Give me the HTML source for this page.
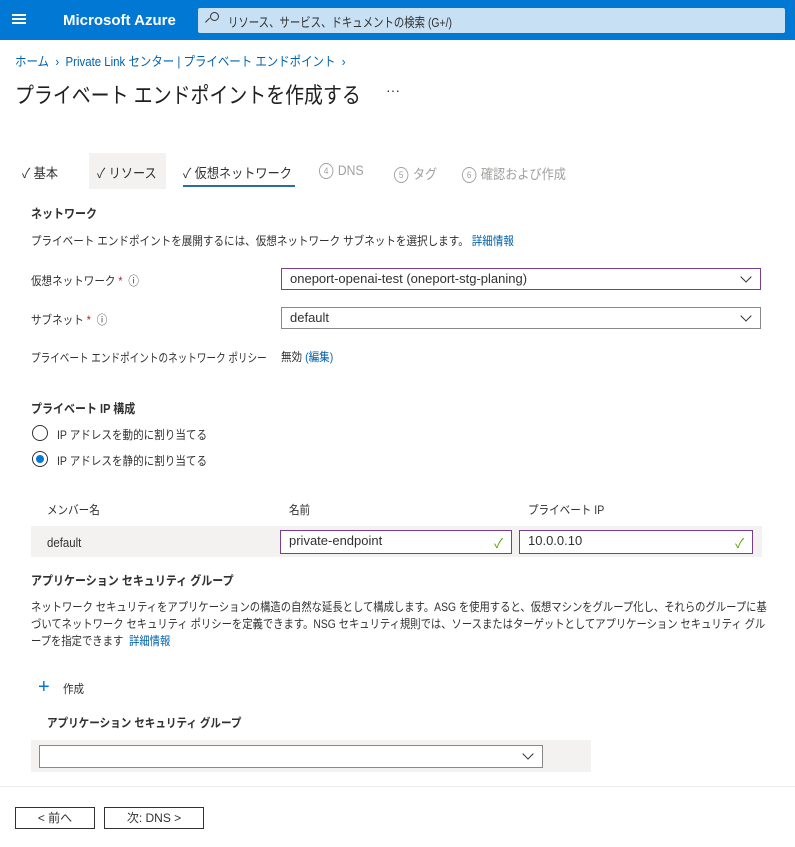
<!DOCTYPE html>
<html><head><meta charset="utf-8"><style>
body{margin:0;width:795px;height:847px;position:relative;background:#fff;font-family:"Liberation Sans","Noto Sans CJK JP",sans-serif;color:#323130;font-size:12px;overflow:hidden}
.a{position:absolute;white-space:nowrap;transform-origin:0 0}
.c{transform:scaleX(.88)}
.blue{color:#0062ad}
.inp{position:absolute;border:1px solid #8a8886;background:#fff;height:22px;box-sizing:border-box;font-size:13px;line-height:20px;padding-left:8px}
.pur{border-color:#7a3e8f}
.chev{position:absolute;right:10px;top:4px;width:7px;height:7px;border-right:1.3px solid #323130;border-bottom:1.3px solid #323130;transform:rotate(45deg)}
.ok{position:absolute;right:8px;top:3px;color:#57a300;font-size:13px}
.radio{position:absolute;width:14px;height:14px;border:1px solid #323130;border-radius:50%}
.btn{position:absolute;border:1px solid #323130;height:22px;box-sizing:border-box;font-size:12px;line-height:20px;text-align:center}
.num{display:inline-block;width:14px;height:14px;border:1px solid #a19f9d;border-radius:50%;font-size:9px;line-height:14px;text-align:center;margin-right:5px;vertical-align:1px}
.tab{font-size:13.5px;transform:scaleX(.9)}
</style></head><body>
<div class="a" style="left:0;top:0;width:795px;height:40px;background:#0078d4"></div>
<div class="a" style="left:12px;top:14px;width:14px;height:2px;background:#fff;box-shadow:0 4px 0 #fff,0 8px 0 #fff"></div>
<div class="a" style="left:63px;top:12px;color:#fff;font-size:15px;font-weight:bold">Microsoft Azure</div>
<div class="a" style="left:198px;top:8px;width:587px;height:25px;background:#c7e0f4;border-radius:2px"></div>
<div class="a" style="left:210px;top:12px;width:7px;height:7px;border:1.3px solid #323130;border-radius:50%"></div>
<div class="a" style="left:205px;top:22px;width:6px;height:1.3px;background:#323130;transform:rotate(-45deg)"></div>
<div class="a" style="left:228px;top:12px;font-size:13px;color:#323130;transform:scaleX(.8)">リソース、サービス、ドキュメントの検索 (G+/)</div>
<div class="a blue c" style="left:15px;top:51px;font-size:13px">ホーム &nbsp;›&nbsp; Private Link センター | プライベート エンドポイント &nbsp;›</div>
<div class="a" style="left:15px;top:78px;font-size:22px;color:#201f1e;transform:scaleX(.86)">プライベート エンドポイントを作成する</div>
<div class="a" style="left:386px;top:82px;font-size:14px">···</div>
<div class="a" style="left:89px;top:153px;width:77px;height:36px;background:#f3f2f1"></div>
<div class="a tab" style="left:22px;top:162px">✓ 基本</div>
<div class="a tab" style="left:97px;top:162px">✓ リソース</div>
<div class="a tab" style="left:183px;top:162px">✓ 仮想ネットワーク</div>
<div class="a" style="left:183px;top:185px;width:112px;height:2px;background:#2b6e9d"></div>
<div class="a tab" style="left:319px;top:163px;color:#a19f9d"><span class="num">4</span>DNS</div>
<div class="a tab" style="left:394px;top:163px;color:#a19f9d"><span class="num">5</span>タグ</div>
<div class="a tab" style="left:462px;top:163px;color:#a19f9d"><span class="num">6</span>確認および作成</div>
<div class="a c" style="left:31px;top:203px;font-size:12.5px;font-weight:bold">ネットワーク</div>
<div class="a c" style="left:31px;top:232px">プライベート エンドポイントを展開するには、仮想ネットワーク サブネットを選択します。 <span class="blue">詳細情報</span></div>
<div class="a c" style="left:31px;top:272px">仮想ネットワーク <span style="color:#a4262c">*</span> &nbsp;ⓘ</div>
<div class="inp pur" style="left:281px;top:268px;width:480px">oneport-openai-test (oneport-stg-planing)<span class="chev"></span></div>
<div class="a c" style="left:31px;top:311px">サブネット <span style="color:#a4262c">*</span> &nbsp;ⓘ</div>
<div class="inp" style="left:281px;top:307px;width:480px">default<span class="chev"></span></div>
<div class="a" style="left:31px;top:349px;transform:scaleX(.8)">プライベート エンドポイントのネットワーク ポリシー</div>
<div class="a c" style="left:281px;top:348px">無効 <span class="blue">(編集)</span></div>
<div class="a c" style="left:31px;top:398px;font-size:12.5px;font-weight:bold">プライベート IP 構成</div>
<div class="radio" style="left:32px;top:425px"></div>
<div class="a c" style="left:57px;top:426px">IP アドレスを動的に割り当てる</div>
<div class="radio" style="left:32px;top:451px"></div>
<div class="a" style="left:36px;top:455px;width:8px;height:8px;border-radius:50%;background:#0078d4"></div>
<div class="a c" style="left:57px;top:452px">IP アドレスを静的に割り当てる</div>
<div class="a c" style="left:47px;top:501px">メンバー名</div>
<div class="a c" style="left:289px;top:501px">名前</div>
<div class="a c" style="left:528px;top:501px">プライベート IP</div>
<div class="a" style="left:31px;top:526px;width:731px;height:31px;background:#f3f2f1"></div>
<div class="a c" style="left:47px;top:535px;font-size:13px">default</div>
<div class="inp pur" style="left:280px;top:530px;width:232px;height:24px">private-endpoint<span class="ok">✓</span></div>
<div class="inp pur" style="left:519px;top:530px;width:234px;height:24px">10.0.0.10<span class="ok">✓</span></div>
<div class="a c" style="left:31px;top:570px;font-size:12.5px;font-weight:bold">アプリケーション セキュリティ グループ</div>
<div class="a" style="left:31px;top:599px;line-height:17px;white-space:normal;width:862px;transform:scaleX(.86)">ネットワーク セキュリティをアプリケーションの構造の自然な延長として構成します。ASG を使用すると、仮想マシンをグループ化し、それらのグループに基づいてネットワーク セキュリティ ポリシーを定義できます。NSG セキュリティ規則では、ソースまたはターゲットとしてアプリケーション セキュリティ グループを指定できます &nbsp;<span class="blue">詳細情報</span></div>
<div class="a" style="left:38px;top:676px;font-size:20px;color:#0078d4;font-weight:300">+</div>
<div class="a c" style="left:63px;top:680px">作成</div>
<div class="a c" style="left:47px;top:714px;font-weight:bold">アプリケーション セキュリティ グループ</div>
<div class="a" style="left:31px;top:740px;width:560px;height:32px;background:#f3f2f1"></div>
<div class="inp" style="left:39px;top:745px;width:504px;height:23px"><span class="chev"></span></div>
<div class="a" style="left:0;top:786px;width:795px;height:1px;background:#edebe9"></div>
<div class="btn" style="left:15px;top:807px;width:80px">&lt; 前へ</div>
<div class="btn" style="left:104px;top:807px;width:100px">次: DNS &gt;</div>
</body></html>
